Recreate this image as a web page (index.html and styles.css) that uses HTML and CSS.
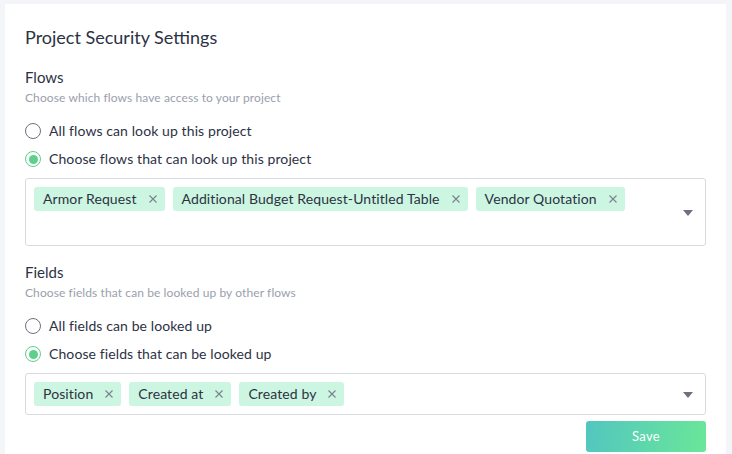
FILE: index.html
```html
<!DOCTYPE html>
<html>
<head>
<meta charset="utf-8">
<link rel="stylesheet" href="styles.css">
</head>
<body>
<div class="card">
  <h1 class="title">Project Security Settings</h1>

  <section class="section">
    <h2 class="sec-title">Flows</h2>
    <p class="sec-sub">Choose which flows have access to your project</p>
    <label class="radio"><span class="dot"></span>All flows can look up this project</label>
    <label class="radio"><span class="dot on"></span>Choose flows that can look up this project</label>
    <div class="select tall">
      <div class="tags">
        <span class="tag">Armor Request<svg class="x" viewBox="0 0 8 8"><path d="M0.5 0.5L7.5 7.5M7.5 0.5L0.5 7.5"/></svg></span>
        <span class="tag">Additional Budget Request-Untitled Table<svg class="x" viewBox="0 0 8 8"><path d="M0.5 0.5L7.5 7.5M7.5 0.5L0.5 7.5"/></svg></span>
        <span class="tag">Vendor Quotation<svg class="x" viewBox="0 0 8 8"><path d="M0.5 0.5L7.5 7.5M7.5 0.5L0.5 7.5"/></svg></span>
      </div>
      <span class="caret"></span>
    </div>
  </section>

  <section class="section">
    <h2 class="sec-title">Fields</h2>
    <p class="sec-sub">Choose fields that can be looked up by other flows</p>
    <label class="radio"><span class="dot"></span>All fields can be looked up</label>
    <label class="radio"><span class="dot on"></span>Choose fields that can be looked up</label>
    <div class="select">
      <div class="tags">
        <span class="tag">Position<svg class="x" viewBox="0 0 8 8"><path d="M0.5 0.5L7.5 7.5M7.5 0.5L0.5 7.5"/></svg></span>
        <span class="tag">Created at<svg class="x" viewBox="0 0 8 8"><path d="M0.5 0.5L7.5 7.5M7.5 0.5L0.5 7.5"/></svg></span>
        <span class="tag">Created by<svg class="x" viewBox="0 0 8 8"><path d="M0.5 0.5L7.5 7.5M7.5 0.5L0.5 7.5"/></svg></span>
      </div>
      <span class="caret"></span>
    </div>
  </section>

  <div class="actions">
    <button class="save">Save</button>
  </div>
</div>
</body>
</html>
```

FILE: styles.css
```css
html, body {
  margin: 0;
  padding: 0;
  background: #f4f5f9;
  font-family: Lato, "Noto Sans", sans-serif;
  color: #2c3244;
}
body {
  padding: 4px 6px 0 5px;
}
.card {
  background: #fff;
  padding: 20px 20px 0 20px;
  height: 450px;
  box-sizing: border-box;
}
.title {
  margin: 0;
  font-size: 18px;
  line-height: 26px;
  font-weight: 400;
}
.section {
  display: flex;
  flex-direction: column;
}
.sec-title {
  margin: 17px 0 0;
  font-size: 15px;
  line-height: 20px;
  font-weight: 400;
}
.section + .section .sec-title {
  margin-top: 16px;
}
.sec-sub {
  margin: 4px 0 0;
  font-size: 12px;
  line-height: 14px;
  color: #9aa0ac;
  letter-spacing: 0.1px;
}
.radio {
  display: flex;
  align-items: center;
  gap: 8px;
  font-size: 14px;
  letter-spacing: 0.1px;
  line-height: 20px;
  height: 20px;
  margin-top: 8px;
}
.sec-sub + .radio {
  margin-top: 16px;
}
.dot {
  width: 16px;
  height: 16px;
  border: 1px solid #6b7180;
  border-radius: 50%;
  box-sizing: border-box;
  display: flex;
  align-items: center;
  justify-content: center;
  flex: none;
}
.dot.on {
  border-color: #5fd08c;
}
.dot.on::after {
  content: "";
  width: 9px;
  height: 9px;
  border-radius: 50%;
  background: #5fd08c;
}
.select {
  margin-top: 9px;
  border: 1px solid #d9dbe1;
  border-radius: 3px;
  padding: 8px 8px;
  display: flex;
  align-items: center;
  min-height: 42px;
  box-sizing: border-box;
}
.select.tall {
  height: 68px;
}
.select.tall .tags {
  align-self: flex-start;
}
.tags {
  flex: 1;
  display: flex;
  flex-wrap: wrap;
  gap: 8px;
}
.tag {
  display: inline-flex;
  align-items: center;
  height: 24px;
  box-sizing: border-box;
  background: #ccf6e1;
  border-radius: 3px;
  padding: 0 8px 2px 9px;
  font-size: 14px;
  letter-spacing: 0.1px;
  color: #2c3244;
}
.x {
  margin-left: 12px;
  margin-top: 2px;
  width: 8px;
  height: 8px;
  stroke: #7a808e;
  stroke-width: 1.1;
  fill: none;
}
.caret {
  width: 0;
  height: 0;
  border-left: 5px solid transparent;
  border-right: 5px solid transparent;
  border-top: 6px solid #6b7180;
  margin-right: 4px;
  margin-top: 2px;
}
.actions {
  display: flex;
  justify-content: flex-end;
  margin-top: 6px;
}
.save {
  width: 120px;
  height: 31px;
  padding-bottom: 2px;
  border: none;
  border-radius: 3px;
  background: linear-gradient(100deg, #52c6c0, #6ae799);
  color: #fff;
  font-family: Lato, sans-serif;
  font-size: 13px;
  letter-spacing: 0.3px;
}
```
